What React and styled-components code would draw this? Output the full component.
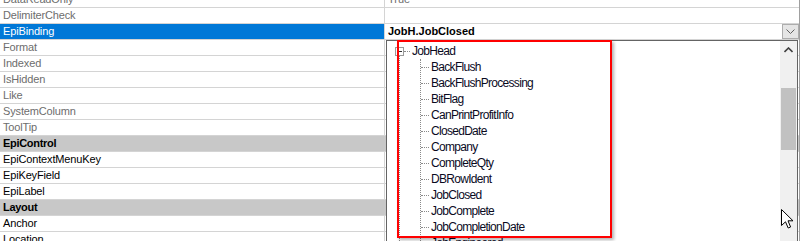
import React from "react";
import styled, { createGlobalStyle } from "styled-components";

const rows = [
  { name: "DataReadOnly", value: "True", dim: true },
  { name: "DelimiterCheck", dim: true },
  { name: "EpiBinding", value: "JobH.JobClosed", selected: true },
  { name: "Format", dim: true },
  { name: "Indexed", dim: true },
  { name: "IsHidden", dim: true },
  { name: "Like", dim: true },
  { name: "SystemColumn", dim: true },
  { name: "ToolTip", dim: true },
  { category: "EpiControl" },
  { name: "EpiContextMenuKey" },
  { name: "EpiKeyField" },
  { name: "EpiLabel" },
  { category: "Layout" },
  { name: "Anchor" },
  { name: "Location" },
];

const fields = [
  "BackFlush",
  "BackFlushProcessing",
  "BitFlag",
  "CanPrintProfitInfo",
  "ClosedDate",
  "Company",
  "CompleteQty",
  "DBRowIdent",
  "JobClosed",
  "JobComplete",
  "JobCompletionDate",
  "JobEngineered",
];

const App = () => {
  return (
    <Page>
      <GlobalStyle />
      <Grid>
        {rows.map((r, i) =>
          r.category ? (
            <CategoryRow key={i}>{r.category}</CategoryRow>
          ) : (
            <Row key={i}>
              <NameCell dim={r.dim} selected={r.selected}>
                {r.name}
              </NameCell>
              <ValueCell bold={r.selected}>
                <span>{r.value}</span>
                {r.selected && (
                  <DropButton>
                    <svg width="9" height="5" viewBox="0 0 9 5">
                      <path d="M0.5 0.5 L4.5 4.5 L8.5 0.5" fill="none" stroke="#606060" strokeWidth="1" />
                    </svg>
                  </DropButton>
                )}
              </ValueCell>
            </Row>
          )
        )}
      </Grid>

      <Popup>
        <TreePane>
          <Node>
            <Gutter>
              <ExpandBox>
                <Minus />
              </ExpandBox>
              <GutterLine />
            </Gutter>
            <NodeBody>
              <RootRow>
                <Stub />
                <Label>JobHead</Label>
              </RootRow>
              <Children>
                {fields.map((f) => (
                  <ChildRow key={f}>
                    <Connector />
                    <Label>{f}</Label>
                  </ChildRow>
                ))}
              </Children>
            </NodeBody>
          </Node>
        </TreePane>
        <ScrollBar>
          <ScrollArrow>
            <svg width="9" height="6" viewBox="0 0 9 6">
              <path d="M0.5 5 L4.5 1 L8.5 5" fill="none" stroke="#404040" strokeWidth="1.6" />
            </svg>
          </ScrollArrow>
          <ScrollThumb />
        </ScrollBar>
      </Popup>

      <Highlight />

      <Cursor width="13" height="20" viewBox="0 0 13 20">
        <path
          d="M0.5 0.5 L0.5 16.5 L4.5 12.8 L7.2 19 L9.6 18 L7 11.8 L12 11.8 Z"
          fill="#fff"
          stroke="#000"
          strokeWidth="1"
          strokeLinejoin="miter"
        />
      </Cursor>
    </Page>
  );
};

const GlobalStyle = createGlobalStyle`
  html, body {
    margin: 0;
    padding: 0;
    background: #fff;
    overflow: hidden;
  }
  body {
    font-family: "Liberation Sans", Arial, sans-serif;
    font-size: 11px;
  }
`;

const Page = styled.div`
  position: relative;
  width: 801px;
  height: 241px;
  overflow: hidden;
  background: #fff;
`;

const Grid = styled.div`
  display: flex;
  flex-direction: column;
  width: 799px;
  margin-top: -8px;
  border-right: 1px solid #a0a0a0;
`;

const Row = styled.div`
  display: grid;
  grid-template-columns: 385px 1fr;
  height: 15px;
  border-bottom: 1px solid #d4d4d4;
`;

const NameCell = styled.div`
  padding-left: 3px;
  line-height: 15px;
  letter-spacing: -0.15px;
  white-space: nowrap;
  color: ${({ dim, selected }) => (selected ? "#fff" : dim ? "#6d6d6d" : "#000")};
  background: ${({ selected }) => (selected ? "#0078d7" : "transparent")};
  border-right: 1px solid #d4d4d4;
`;

const ValueCell = styled.div`
  display: flex;
  align-items: stretch;
  justify-content: space-between;
  padding-left: 3px;
  line-height: 15px;
  color: ${({ bold }) => (bold ? "#000" : "#6d6d6d")};
  font-weight: ${({ bold }) => (bold ? "bold" : "normal")};
  span {
    white-space: nowrap;
  }
`;

const DropButton = styled.div`
  width: 15px;
  height: 13px;
  border: 1px solid #adadad;
  background: #e5e5e5;
  display: flex;
  align-items: center;
  justify-content: center;
`;

const CategoryRow = styled.div`
  height: 15px;
  line-height: 15px;
  padding-left: 3px;
  font-weight: bold;
  letter-spacing: -0.3px;
  background: #c8c8c8;
  border-bottom: 1px solid #d4d4d4;
`;

const Popup = styled.div`
  position: absolute;
  left: 386px;
  top: 40px;
  width: 410px;
  height: 220px;
  border: 1px solid #646464;
  background: #fff;
  display: flex;
`;

const TreePane = styled.div`
  flex: 1;
  padding: 2px 0 0 8px;
  color: #0a0a1e;
  overflow: hidden;
`;

const Node = styled.div`
  display: flex;
`;

const Gutter = styled.div`
  width: 9px;
  display: flex;
  flex-direction: column;
  align-items: center;
`;

const ExpandBox = styled.div`
  margin-top: 4px;
  width: 7px;
  height: 7px;
  border: 1px solid #9a9a9a;
  background: #fff;
  display: flex;
  align-items: center;
  justify-content: center;
`;

const Minus = styled.div`
  width: 5px;
  height: 1px;
  background: #333;
`;

const GutterLine = styled.div`
  flex: 1;
  width: 0;
  border-left: 1px dotted #8a8a8a;
`;

const NodeBody = styled.div`
  display: flex;
  flex-direction: column;
`;

const RootRow = styled.div`
  display: flex;
  align-items: center;
  height: 16px;
`;

const Stub = styled.div`
  width: 6px;
  margin-right: 2px;
  border-top: 1px dotted #8a8a8a;
`;

const Label = styled.span`
  font-size: 12px;
  line-height: 16px;
  white-space: nowrap;
  letter-spacing: -0.7px;
`;

const Children = styled.div`
  margin-left: 16px;
  border-left: 1px dotted #8a8a8a;
`;

const ChildRow = styled.div`
  display: flex;
  align-items: center;
  height: 16px;
`;

const Connector = styled.div`
  width: 8px;
  margin-right: 2px;
  border-top: 1px dotted #8a8a8a;
`;

const ScrollBar = styled.div`
  width: 17px;
  background: #f0f0f0;
  display: flex;
  flex-direction: column;
  align-items: center;
`;

const ScrollArrow = styled.div`
  height: 17px;
  width: 17px;
  display: flex;
  align-items: center;
  justify-content: center;
`;

const ScrollThumb = styled.div`
  margin-top: 30px;
  width: 15px;
  height: 62px;
  background: #c1c1c1;
`;

const Highlight = styled.div`
  position: absolute;
  left: 397px;
  top: 40px;
  width: 211px;
  height: 194px;
  border: 2px solid #ff0000;
  box-shadow: 2px 2px 3px rgba(0, 0, 0, 0.3);
`;

const Cursor = styled.svg`
  position: absolute;
  left: 781px;
  top: 209px;
`;

export default App;
